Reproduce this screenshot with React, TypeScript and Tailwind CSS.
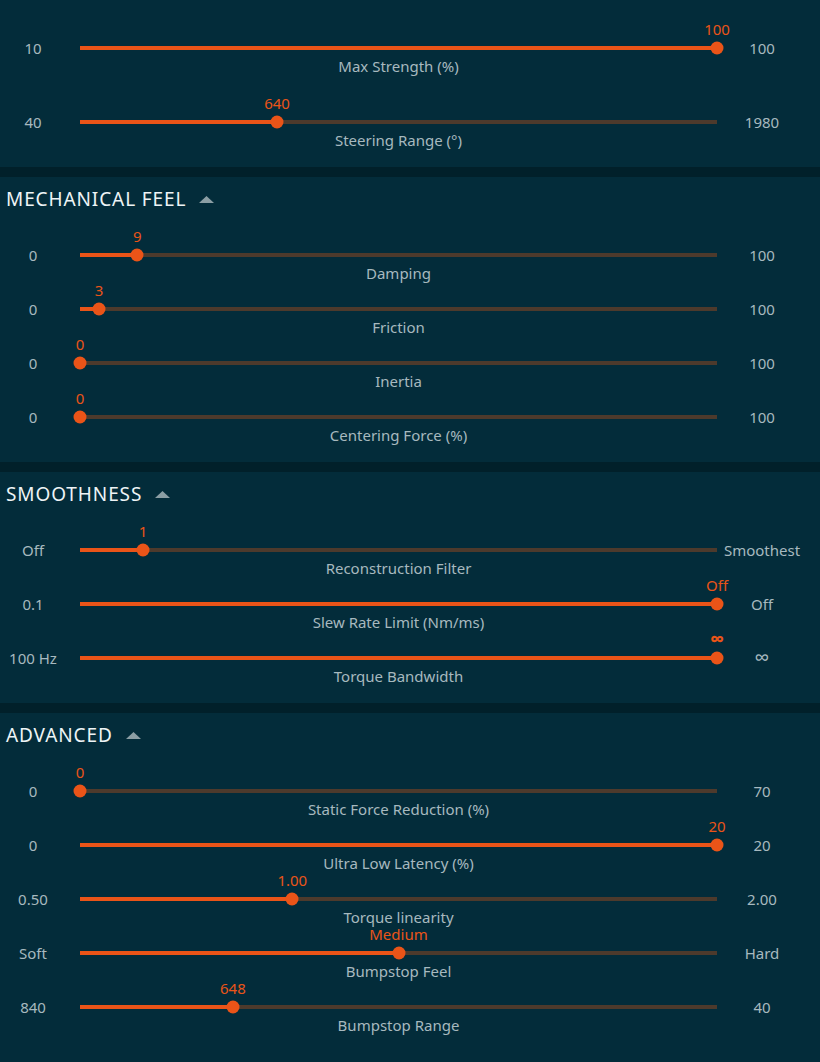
import React from 'react'

interface SliderRow {
  label: string
  min: string
  max: string
  value: string
  pct: number
  infinity?: boolean
}

const sections: { title?: string; rows: SliderRow[]; gap?: boolean }[] = [
  {
    gap: true,
    rows: [
      { label: 'Max Strength (%)', min: '10', max: '100', value: '100', pct: 100 },
      { label: 'Steering Range (°)', min: '40', max: '1980', value: '640', pct: 30.93 },
    ],
  },
  {
    title: 'MECHANICAL FEEL',
    rows: [
      { label: 'Damping', min: '0', max: '100', value: '9', pct: 9 },
      { label: 'Friction', min: '0', max: '100', value: '3', pct: 3 },
      { label: 'Inertia', min: '0', max: '100', value: '0', pct: 0 },
      { label: 'Centering Force (%)', min: '0', max: '100', value: '0', pct: 0 },
    ],
  },
  {
    title: 'SMOOTHNESS',
    rows: [
      { label: 'Reconstruction Filter', min: 'Off', max: 'Smoothest', value: '1', pct: 9.9 },
      { label: 'Slew Rate Limit (Nm/ms)', min: '0.1', max: 'Off', value: 'Off', pct: 100 },
      { label: 'Torque Bandwidth', min: '100 Hz', max: '∞', value: '∞', pct: 100, infinity: true },
    ],
  },
  {
    title: 'ADVANCED',
    rows: [
      { label: 'Static Force Reduction (%)', min: '0', max: '70', value: '0', pct: 0 },
      { label: 'Ultra Low Latency (%)', min: '0', max: '20', value: '20', pct: 100 },
      { label: 'Torque linearity', min: '0.50', max: '2.00', value: '1.00', pct: 33.33 },
      { label: 'Bumpstop Feel', min: 'Soft', max: 'Hard', value: 'Medium', pct: 50 },
      { label: 'Bumpstop Range', min: '840', max: '40', value: '648', pct: 24 },
    ],
  },
]

function Slider({ row }: { row: SliderRow }) {
  return (
    <div className="flex items-center h-[54px]">
      <div className="w-[66px] text-center text-[15px] text-[#a7b9bf]">{row.min}</div>
      <div className="ml-[14px] w-[637px] h-[54px] pt-[1px] flex flex-col">
        <div className="relative h-[14px]">
          <span
            className={`absolute top-0 -translate-x-1/2 leading-[14px] text-[#ea5418] whitespace-nowrap ${
              row.infinity ? 'text-[20px] font-bold' : 'text-[15px]'
            }`}
            style={{ left: `${row.pct}%` }}
          >
            {row.value}
          </span>
        </div>
        <div className="relative h-[4px] mt-[10px] bg-[#4d3a2c]">
          <div className="absolute left-0 top-0 h-full bg-[#ea5418]" style={{ width: `${row.pct}%` }} />
          <div
            className="absolute top-1/2 w-[13px] h-[13px] -translate-x-1/2 -translate-y-1/2 rounded-full bg-[#ea5418]"
            style={{ left: `${row.pct}%` }}
          />
        </div>
        <div className="mt-[9px] h-[14px] leading-[14px] text-center text-[15px] text-[#a7b9bf] whitespace-nowrap">
          {row.label}
        </div>
      </div>
      <div className={`w-[90px] text-center text-[#a7b9bf] ${row.infinity ? 'text-[21px]' : 'text-[15px]'}`}>
        {row.max}
      </div>
    </div>
  )
}

export default function App() {
  return (
    <div
      className="min-h-screen w-[820px] bg-[#01202a] flex flex-col gap-[10px]"
      style={{ fontFamily: '"Noto Sans", "Open Sans", sans-serif' }}
    >
      {sections.map((s, i) => (
        <section
          key={i}
          className={`bg-[#032c3a] pb-[18px] ${s.title ? 'pt-[10px]' : 'pt-[21px]'} ${i === sections.length - 1 ? 'flex-1' : ''}`}
        >
          {s.title && (
            <div className="flex items-center h-[24px] pl-[6px] mb-[17px]">
              <span className="text-[19px] text-[#eef4f6] tracking-[0.9px]">{s.title}</span>
              <svg width="15" height="7" viewBox="0 0 15 7" className="ml-[13px]">
                <polygon points="0,7 7.5,0 15,7" fill="#8b9ea4" />
              </svg>
            </div>
          )}
          <div className={`flex flex-col ${s.gap ? 'gap-[20px]' : ''}`}>
            {s.rows.map(r => (
              <Slider key={r.label} row={r} />
            ))}
          </div>
        </section>
      ))}
    </div>
  )
}
